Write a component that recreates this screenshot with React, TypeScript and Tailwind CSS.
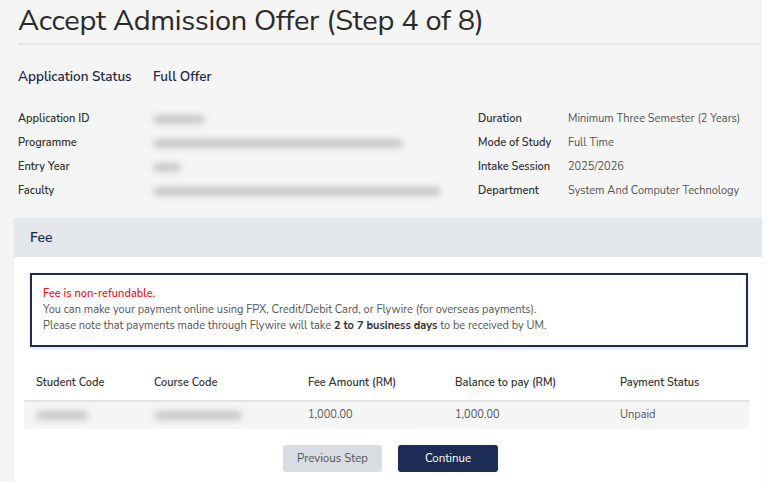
import React from "react";

const F = { fontFamily: '"Nunito Sans", "Open Sans", Lato, sans-serif' };

function Blur({ w }: { w: number }) {
  return (
    <div className="h-[14px] flex items-center">
      <div className="h-[9px] rounded-full bg-[#c9c9c9] blur-[3px]" style={{ width: w }} />
    </div>
  );
}

export default function App() {
  const left: [string, number][] = [
    ["Application ID", 52],
    ["Programme", 250],
    ["Entry Year", 28],
    ["Faculty", 288],
  ];
  const right: [string, string][] = [
    ["Duration", "Minimum Three Semester (2 Years)"],
    ["Mode of Study", "Full Time"],
    ["Intake Session", "2025/2026"],
    ["Department", "System And Computer Technology"],
  ];
  return (
    <div className="w-[775px] h-[482px] bg-white overflow-hidden text-[#333]" style={F}>
      <div className="w-[762px] h-[482px] bg-[#f5f5f5]">
        <div className="pl-[18px] pr-[1px]">
          <h1 className="text-[29px] leading-[40px] pt-[1px] text-[#2b2b2b] font-normal tracking-[-0.3px]">
            Accept Admission Offer (Step 4 of 8)
          </h1>
          <div className="h-[2px] bg-[#e4e4e4] mt-[2px]" />
          <div className="flex mt-[23px] text-[13.5px] font-semibold text-[#1f2a44] leading-[18px]">
            <div className="w-[135px]">Application Status</div>
            <div>Full Offer</div>
          </div>
          <div className="flex mt-[21px] text-[11px] leading-[24px]">
            <div className="w-[460px] flex">
              <div className="w-[135px] font-semibold text-[#333]">
                {left.map(([l]) => (
                  <div key={l}>{l}</div>
                ))}
              </div>
              <div>
                {left.map(([l, w]) => (
                  <div key={l} className="h-[24px] flex items-center">
                    <Blur w={w} />
                  </div>
                ))}
              </div>
            </div>
            <div className="flex">
              <div className="w-[90px] font-semibold text-[#333]">
                {right.map(([l]) => (
                  <div key={l}>{l}</div>
                ))}
              </div>
              <div className="text-[#555]">
                {right.map(([l, v]) => (
                  <div key={l}>{v}</div>
                ))}
              </div>
            </div>
          </div>
        </div>
        <div className="ml-[14px] mt-[15px] w-[748px] bg-white shadow-[0_0_2px_rgba(0,0,0,0.08)]">
          <div className="h-[39px] bg-[#e4e7eb] flex items-center pl-[16px] text-[14px] font-semibold text-[#1f2a44]">
            Fee
          </div>
          <div className="pt-[16px] pl-[16px] pr-[14px] pb-[10px]">
            <div className="border-2 border-[#1c2d55] shadow-[0_2px_4px_rgba(0,0,0,0.12)] pt-[11px] pb-[11px] px-[11px] text-[11px] leading-[16px] text-[#555]">
              <div className="text-[#ee1c1c] font-semibold">Fee is non-refundable.</div>
              <div>You can make your payment online using FPX, Credit/Debit Card, or Flywire (for overseas payments).</div>
              <div>
                Please note that payments made through Flywire will take{" "}
                <span className="font-bold text-[#333]">2 to 7 business days</span> to be received by UM.
              </div>
            </div>
            <div className="mt-[23px] -ml-[6px] w-[725px] text-[11px]">
              <div className="grid grid-cols-[118px_154px_147px_165px_1fr] pl-[12px] pb-[3px] font-semibold text-[#333] h-[30px] items-center">
                <div>Student Code</div>
                <div>Course Code</div>
                <div>Fee Amount (RM)</div>
                <div>Balance to pay (RM)</div>
                <div>Payment Status</div>
              </div>
              <div className="border-t-2 border-[#e2e2e2] bg-[#f5f5f5] h-[29px] grid grid-cols-[118px_154px_147px_165px_1fr] pl-[12px] items-center text-[#555]">
                <div><Blur w={52} /></div>
                <div><Blur w={88} /></div>
                <div>1,000.00</div>
                <div>1,000.00</div>
                <div>Unpaid</div>
              </div>
            </div>
            <div className="flex justify-center gap-[16px] mt-[16px] pl-[3px]">
              <button className="w-[99px] h-[27px] rounded-[3px] bg-[#d9dde3] text-[11.5px] text-[#555]">
                Previous Step
              </button>
              <button className="w-[100px] h-[27px] rounded-[3px] bg-[#1b2d55] text-[11.5px] text-white">
                Continue
              </button>
            </div>
          </div>
        </div>
      </div>
    </div>
  );
}
